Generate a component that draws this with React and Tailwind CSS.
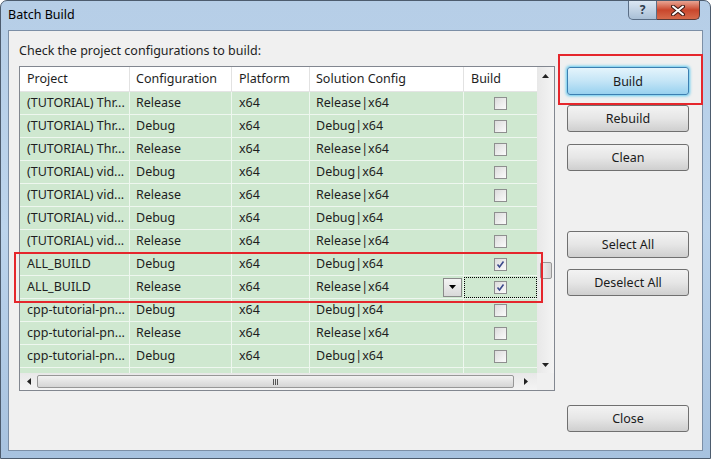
import React from 'react';

const rows = [
  ['(TUTORIAL) Thr...', 'Release', 'x64', 'Release|x64', false],
  ['(TUTORIAL) Thr...', 'Debug', 'x64', 'Debug|x64', false],
  ['(TUTORIAL) Thr...', 'Release', 'x64', 'Release|x64', false],
  ['(TUTORIAL) vid...', 'Debug', 'x64', 'Debug|x64', false],
  ['(TUTORIAL) vid...', 'Release', 'x64', 'Release|x64', false],
  ['(TUTORIAL) vid...', 'Debug', 'x64', 'Debug|x64', false],
  ['(TUTORIAL) vid...', 'Release', 'x64', 'Release|x64', false],
  ['ALL_BUILD', 'Debug', 'x64', 'Debug|x64', true],
  ['ALL_BUILD', 'Release', 'x64', 'Release|x64', true, true],
  ['cpp-tutorial-pn...', 'Debug', 'x64', 'Debug|x64', false],
  ['cpp-tutorial-pn...', 'Release', 'x64', 'Release|x64', false],
  ['cpp-tutorial-pn...', 'Debug', 'x64', 'Debug|x64', false],
];

const Checkbox = ({ checked }) => (
  <div className="w-[13px] h-[13px] border border-[#8e8f8f] bg-gradient-to-br from-[#dcdcdc] to-[#fbfbfb] flex items-center justify-center">
    {checked && (
      <svg width="9" height="9" viewBox="0 0 9 9">
        <path d="M1.5 4.5 L3.5 7 L7.5 1.5" fill="none" stroke="#3b4a8c" strokeWidth="1.6" />
      </svg>
    )}
  </div>
);

const WinButton = ({ children, className = '', focused }) => (
  <div
    className={`w-[122px] h-[27px] pt-[2px] rounded-[3px] border flex items-center justify-center text-[12.5px] text-[#1b1b1b] ${
      focused
        ? 'border-[#3c7fb1] bg-gradient-to-b from-[#e5f4fc] via-[#c4e5f6] to-[#98d1ef] shadow-[0_0_3px_1px_#5cc8f0]'
        : 'border-[#707070] bg-gradient-to-b from-[#f3f3f3] via-[#e6e6e6] to-[#cfcfcf]'
    } ${className}`}
  >
    {children}
  </div>
);

export default function App() {
  return (
    <div
      className="relative w-[711px] h-[459px] overflow-hidden rounded-t-[7px] border border-[#4d5c6e] bg-gradient-to-b from-[#b6cee7] via-[#bcd4ec] to-[#a7c2df] flex flex-col"
      style={{ fontFamily: '"Noto Sans", "Open Sans", sans-serif' }}
    >
      {/* title bar */}
      <div className="h-[29px] flex items-start shrink-0">
        <span className="ml-[7px] mt-[6px] text-[12.5px] text-black leading-[16px]">Batch Build</span>
        <div className="ml-auto mr-[10px] flex">
          <div className="w-[29px] h-[19px] rounded-bl-[5px] border border-t-0 border-[#5a6e86] bg-gradient-to-b from-[#dbe7f3] to-[#a9bfd6] flex items-center justify-center text-[12px] font-bold text-[#2f3c4c] leading-none">
            ?
          </div>
          <div className="w-[43px] h-[19px] rounded-br-[5px] border border-t-0 border-l-0 border-[#5a3a36] bg-gradient-to-b from-[#e8a493] via-[#c9462c] to-[#d66a4b] flex items-center justify-center">
            <svg width="14" height="11" viewBox="0 0 14 11">
              <path d="M2 1.5 L12 9.5 M12 1.5 L2 9.5" stroke="#3d1b16" strokeWidth="4" strokeLinecap="round" />
              <path d="M2 1.5 L12 9.5 M12 1.5 L2 9.5" stroke="#ffffff" strokeWidth="2" strokeLinecap="round" />
            </svg>
          </div>
        </div>
      </div>

      {/* client area */}
      <div className="mx-[7px] mb-[7px] flex-1 border border-[#7c8fa6] bg-[#f0f0f0] flex">
        <div className="pl-[10px] pt-[12px] flex flex-col">
          <div className="text-[12.5px] leading-[16px] text-[#1e1e1e]">Check the project configurations to build:</div>
          <div className="mt-[7px] w-[536px] h-[325px] border border-[#828790] bg-white flex flex-col">
            <div className="h-[306px] flex">
              <div className="w-[517px] overflow-hidden flex flex-col bg-[#cfe8d0]">
                <div className="h-[25px] shrink-0 flex text-[12.5px] text-[#1e1e1e] bg-white border-b border-[#e4e4e4]">
                  <div className="w-[110px] pl-[7px] flex items-center border-r border-[#e2e2e2]">Project</div>
                  <div className="w-[102px] pl-[6px] flex items-center border-r border-[#e2e2e2]">Configuration</div>
                  <div className="w-[78px] pl-[7px] flex items-center border-r border-[#e2e2e2]">Platform</div>
                  <div className="w-[154px] pl-[6px] flex items-center border-r border-[#e2e2e2]">Solution Config</div>
                  <div className="w-[73px] pl-[7px] flex items-center">Build</div>
                </div>
                {rows.map((r, i) => (
                  <div key={i} className="h-[23px] shrink-0 flex text-[12.5px] text-[#1e1e1e] bg-[#cfe8d0] border-b border-[#eef7ef]">
                    <div className="w-[110px] pl-[7px] flex items-center border-r border-[#eef7ef] whitespace-nowrap overflow-hidden">{r[0]}</div>
                    <div className="w-[102px] pl-[6px] flex items-center border-r border-[#eef7ef]">{r[1]}</div>
                    <div className="w-[78px] pl-[7px] flex items-center border-r border-[#eef7ef]">{r[2]}</div>
                    <div className="w-[154px] pl-[6px] pr-[1px] flex items-center border-r border-[#eef7ef]">
                      <span>{r[3]}</span>
                      {r[5] && (
                        <div className="ml-auto w-[19px] h-[19px] border border-[#8a8a8a] bg-gradient-to-b from-[#f4f4f4] to-[#d9d9d9] flex items-center justify-center">
                          <svg width="7" height="4" viewBox="0 0 7 4">
                            <path d="M0 0 H7 L3.5 4 Z" fill="#000" />
                          </svg>
                        </div>
                      )}
                    </div>
                    <div className="w-[73px] flex items-center justify-center">
                      <div className={`w-[71px] h-[19px] flex items-center justify-center ${r[5] ? 'outline outline-1 outline-dotted outline-black' : ''}`}>
                        <Checkbox checked={r[4]} />
                      </div>
                    </div>
                  </div>
                ))}
                <div className="flex-1 flex">
                  <div className="w-[110px] border-r border-[#eef7ef]" />
                  <div className="w-[102px] border-r border-[#eef7ef]" />
                  <div className="w-[78px] border-r border-[#eef7ef]" />
                  <div className="w-[154px] border-r border-[#eef7ef]" />
                </div>
              </div>
              {/* vertical scrollbar */}
              <div className="w-[17px] bg-gradient-to-r from-[#e8e8e8] to-[#f4f4f4] flex flex-col items-center">
                <div className="h-[17px] flex items-center justify-center">
                  <svg width="7" height="4" viewBox="0 0 7 4">
                    <path d="M0 4 H7 L3.5 0 Z" fill="#222" />
                  </svg>
                </div>
                <div className="mt-[178px] w-[12px] h-[17px] rounded-[2px] border border-[#979797] bg-gradient-to-r from-[#f0f0f0] to-[#d6d6d6]" />
                <div className="mt-auto h-[17px] flex items-center justify-center">
                  <svg width="7" height="4" viewBox="0 0 7 4">
                    <path d="M0 0 H7 L3.5 4 Z" fill="#222" />
                  </svg>
                </div>
              </div>
            </div>
            {/* horizontal scrollbar */}
            <div className="h-[17px] flex bg-gradient-to-b from-[#e8e8e8] to-[#f4f4f4]">
              <div className="w-[517px] flex items-center">
                <div className="w-[17px] flex items-center justify-center">
                  <svg width="4" height="7" viewBox="0 0 4 7">
                    <path d="M4 0 V7 L0 3.5 Z" fill="#222" />
                  </svg>
                </div>
                <div className="w-[477px] h-[13px] rounded-[2px] border border-[#979797] bg-gradient-to-b from-[#f2f2f2] to-[#d5d5d5] flex items-center justify-center">
                  <div className="flex gap-[1px]">
                    <div className="w-[1px] h-[6px] bg-[#555]" />
                    <div className="w-[1px] h-[6px] bg-[#555]" />
                    <div className="w-[1px] h-[6px] bg-[#555]" />
                  </div>
                </div>
                <div className="flex-1 flex items-center justify-center">
                  <svg width="4" height="7" viewBox="0 0 4 7">
                    <path d="M0 0 V7 L4 3.5 Z" fill="#222" />
                  </svg>
                </div>
              </div>
              <div className="w-[17px] bg-[#f0f0f0]" />
            </div>
          </div>
        </div>

        {/* buttons */}
        <div className="ml-[12px] pt-[36px] flex flex-col">
          <WinButton focused className="h-[28px]">Build</WinButton>
          <WinButton className="mt-[10px]">Rebuild</WinButton>
          <WinButton className="mt-[12px]">Clean</WinButton>
          <WinButton className="mt-[60px]">Select All</WinButton>
          <WinButton className="mt-[11px]">Deselect All</WinButton>
          <WinButton className="mt-[109px]">Close</WinButton>
        </div>
      </div>

      {/* annotation highlights */}
      <div className="absolute left-[557px] top-[53px] w-[145px] h-[51px] border-2 border-[#e5262c] pointer-events-none" />
      <div className="absolute left-[13px] top-[251px] w-[529px] h-[51px] border-2 border-[#e5262c] pointer-events-none" />
    </div>
  );
}
